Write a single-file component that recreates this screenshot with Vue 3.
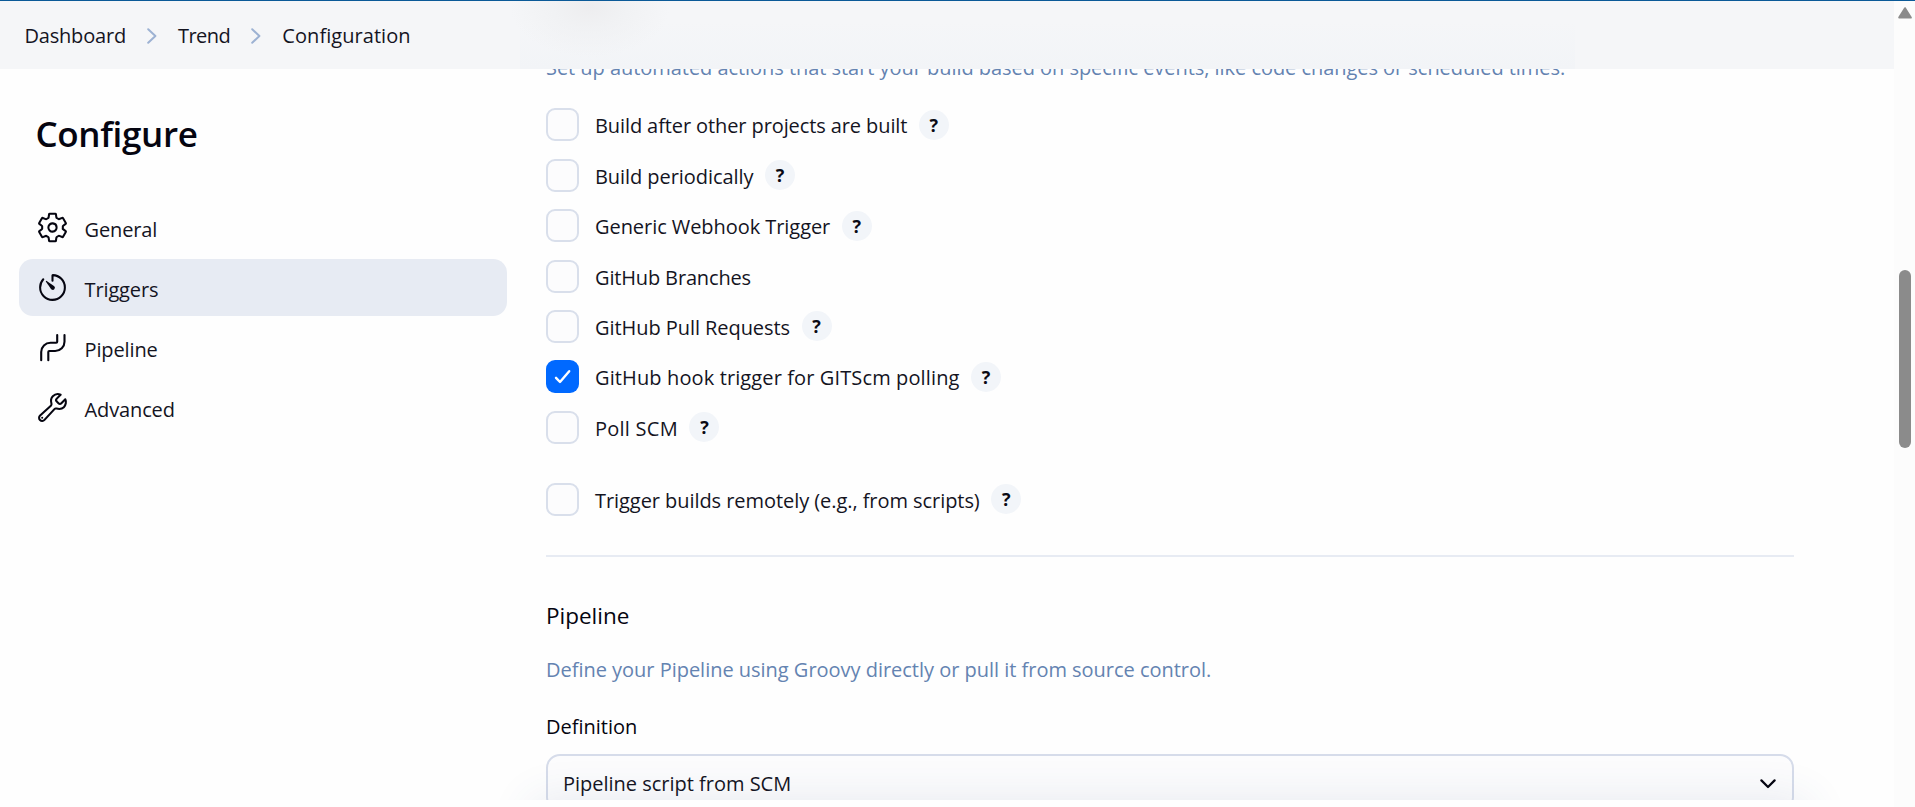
<script setup>
const crumbs = [
  { text: 'Dashboard', cls: 'crumb-dashboard' },
  { text: 'Trend', cls: 'crumb-trend' },
  { text: 'Configuration', cls: 'crumb-configuration' },
]

const sections = [
  { text: 'General', icon: 'gear' },
  { text: 'Triggers', icon: 'timer', active: true },
  { text: 'Pipeline', icon: 'pipeline' },
  { text: 'Advanced', icon: 'wrench' },
]

const triggers = [
  { text: 'Build after other projects are built', help: true, cls: 't-after' },
  { text: 'Build periodically', help: true, cls: 't-periodic' },
  { text: 'Generic Webhook Trigger', help: true, cls: 't-webhook' },
  { text: 'GitHub Branches', cls: 't-branches' },
  { text: 'GitHub Pull Requests', help: true, cls: 't-pulls' },
  { text: 'GitHub hook trigger for GITScm polling', help: true, checked: true, cls: 't-hook' },
  { text: 'Poll SCM', help: true, cls: 't-poll' },
  { text: 'Trigger builds remotely (e.g., from scripts)', help: true, cls: 't-remote' },
]
</script>

<template>
  <div class="window">
    <div class="page">
      <header class="breadcrumbs">
        <template v-for="(crumb, i) in crumbs" :key="crumb.text">
          <svg v-if="i" class="chevron" viewBox="0 0 10 16">
            <path d="M1.2 1.2 8.4 8 1.2 14.8" />
          </svg>
          <a :class="crumb.cls">{{ crumb.text }}</a>
        </template>
      </header>

      <div class="body">
        <aside class="sidebar">
          <h1>Configure</h1>
          <nav>
            <a v-for="item in sections" :key="item.text" class="task" :class="{ active: item.active }">
              <svg v-if="item.icon === 'gear'" class="icon" viewBox="0 0 512 512">
                <path d="M262.29 192.31a64 64 0 1057.4 57.4 64.13 64.13 0 00-57.4-57.4zM416.39 256a154.34 154.34 0 01-1.53 20.79l45.21 35.46a10.81 10.81 0 012.45 13.75l-42.77 74a10.81 10.81 0 01-13.14 4.59l-44.9-18.08a16.11 16.11 0 00-15.17 1.75A164.48 164.48 0 01325 400.8a15.94 15.94 0 00-8.82 12.14l-6.73 47.89a11.08 11.08 0 01-10.68 9.17h-85.54a11.11 11.11 0 01-10.69-8.87l-6.72-47.82a16.07 16.07 0 00-9-12.22 155.3 155.3 0 01-21.46-12.57 16 16 0 00-15.11-1.71l-44.89 18.07a10.81 10.81 0 01-13.14-4.58l-42.77-74a10.8 10.8 0 012.45-13.75l38.21-30a16.05 16.05 0 006-14.08c-.36-4.17-.58-8.33-.58-12.5s.21-8.27.58-12.35a16 16 0 00-6.07-13.94l-38.19-30A10.81 10.81 0 0149.48 186l42.77-74a10.81 10.81 0 0113.14-4.59l44.9 18.08a16.11 16.11 0 0015.17-1.75A164.48 164.48 0 01187 111.2a15.94 15.94 0 008.82-12.14l6.73-47.89A11.08 11.08 0 01213.23 42h85.54a11.11 11.11 0 0110.69 8.87l6.72 47.82a16.07 16.07 0 009 12.22 155.3 155.3 0 0121.46 12.57 16 16 0 0015.11 1.71l44.89-18.07a10.81 10.81 0 0113.14 4.58l42.77 74a10.8 10.8 0 01-2.45 13.75l-38.21 30a16.05 16.05 0 00-6.05 14.08c.33 4.14.55 8.3.55 12.47z" />
              </svg>
              <svg v-else-if="item.icon === 'timer'" class="icon" viewBox="0 0 512 512">
                <path d="M112.91 128A191.85 191.85 0 0064 254c-1.18 106.35 85.65 193.8 192 194 106.2.2 192-85.83 192-192 0-104.54-83.55-189.61-187.5-192a4.36 4.36 0 00-4.5 4.37V152" />
                <path class="solid" d="M233.38 278.63l-79-113a8.13 8.13 0 0111.32-11.32l113 79a32.5 32.5 0 01-37.25 53.26 33.21 33.21 0 01-8.07-7.94z" />
              </svg>
              <svg v-else-if="item.icon === 'pipeline'" class="icon thin" viewBox="0 0 33 33">
                <path d="M5.2 29.3V21a9.3 9.3 0 0 1 9.3-9.3h5.7a1 1 0 0 0 1-1V4" />
                <path d="M12.3 29.3V21a1 1 0 0 1 1-1h5.9a9.3 9.3 0 0 0 9.3-9.3V4" />
              </svg>
              <svg v-else class="icon" viewBox="0 0 512 512">
                <path d="M393.87 190a32.1 32.1 0 01-45.25 0l-26.57-26.57a32.09 32.09 0 010-45.26L382.19 58a1 1 0 00-.3-1.64c-38.82-16.64-89.15-8.16-121.11 23.57-30.58 30.35-32.32 76-21.12 115.84a31.93 31.93 0 01-9.06 32.08L64 380a48.17 48.17 0 1068 68l153.86-167a31.93 31.93 0 0131.6-9.13c39.54 10.59 84.54 8.6 114.72-21.19 32.49-32 39.5-88.56 23.75-120.93a1 1 0 00-1.6-.26z" />
                <circle class="solid" cx="96" cy="416" r="16" />
              </svg>
              <span>{{ item.text }}</span>
            </a>
          </nav>
        </aside>

        <main class="content">
          <p class="description intro">Set up automated actions that start your build based on specific events, like code changes or scheduled times.</p>

          <div class="triggers">
            <div v-for="item in triggers" :key="item.text" class="trigger" :class="item.cls">
              <span class="checkbox" :class="{ checked: item.checked }">
                <svg v-if="item.checked" viewBox="0 0 33 33"><path d="M10 17.8 14 22 23.2 11.2" /></svg>
              </span>
              <span class="label">{{ item.text }}</span>
              <span v-if="item.help" class="help">?</span>
            </div>
          </div>

          <hr />

          <h2>Pipeline</h2>
          <p class="description define">Define your Pipeline using Groovy directly or pull it from source control.</p>
          <div class="field-label">Definition</div>
          <div class="select">
            <span>Pipeline script from SCM</span>
            <svg viewBox="0 0 16 10"><path d="M1.4 1.4 8 8 14.6 1.4" /></svg>
          </div>
        </main>
        <div class="bottom-shadow"></div>
      </div>
    </div>

    <div class="scrollbar">
      <svg viewBox="0 0 14 12"><path d="M7 1.2 12.8 10.6H1.2Z" /></svg>
      <div class="thumb"></div>
    </div>
  </div>
</template>

<style>
body {
  margin: 0;
  background: #fff;
  overflow: hidden;
}
</style>

<style scoped>
.window {
  box-sizing: border-box;
  display: flex;
  width: 1915px;
  height: 807px;
  border-top: 1px solid #0b5a98;
  background: #fefefe;
  color: #14141f;
  font-family: "Open Sans", "Noto Sans", sans-serif;
  font-size: 20px;
  line-height: 30px;
}

.page {
  width: 1894px;
  display: flex;
  flex-direction: column;
}

.breadcrumbs {
  box-sizing: border-box;
  flex: none;
  display: flex;
  align-items: center;
  height: 68px;
  padding: 2px 0 0 24.5px;
  background:
    radial-gradient(ellipse 80px 50px at 590px 6px, #ededef 0%, rgba(238, 239, 241, 0.6) 45%, rgba(245, 246, 248, 0) 100%),
    linear-gradient(to bottom, rgba(242, 244, 247, 0) 20px, #f2f4f7 68px) 520px 0 / 1055px 68px no-repeat,
    #f5f6f8;
}

.crumb-dashboard {
  letter-spacing: -0.2px;
}

.crumb-trend {
  letter-spacing: -0.5px;
}

.crumb-configuration {
  letter-spacing: 0.05px;
}

.chevron {
  width: 10px;
  height: 16px;
  margin: 0 21px 0 21px;
  fill: none;
  stroke: #9db2d3;
  stroke-width: 2;
  stroke-linecap: round;
  stroke-linejoin: round;
}

.body {
  position: relative;
  display: flex;
  height: 731px;
  overflow: hidden;
}

.sidebar {
  flex: none;
  width: 488px;
  padding: 41px 0 0 19px;
}

h1 {
  margin: 0 0 41px 16.5px;
  color: #050510;
  font-size: 35px;
  font-weight: 600;
  letter-spacing: -0.35px;
  line-height: 48px;
}

nav {
  display: flex;
  flex-direction: column;
  gap: 3px;
}

.task {
  display: flex;
  align-items: center;
  height: 57px;
  padding-left: 17px;
  border-radius: 14px;
}

.task.active {
  background: #e7ebf3;
}

.task span {
  margin-left: 15.5px;
  padding-top: 4px;
  letter-spacing: -0.12px;
}

.icon {
  width: 33px;
  height: 33px;
  fill: none;
  stroke: #050510;
  stroke-width: 32;
  stroke-linecap: round;
  stroke-linejoin: round;
}

.icon.thin {
  stroke-width: 2.1;
}

.icon .solid {
  fill: #050510;
  stroke: none;
}

.content {
  width: 1248px;
  margin-left: 39px;
}

.description {
  margin: 0;
  color: #6483b1;
  white-space: nowrap;
}

.intro {
  margin-top: -16px;
  letter-spacing: -0.045px;
}

.triggers {
  margin-top: 25px;
}

.trigger {
  display: flex;
  align-items: flex-start;
  height: 33px;
  margin-bottom: 18px;
}

.trigger.t-periodic,
.trigger.t-branches,
.trigger.t-pulls {
  margin-bottom: 17px;
}

.trigger.t-poll {
  margin-bottom: 39px;
}

.trigger.t-remote {
  margin-bottom: 0;
}

.checkbox {
  box-sizing: border-box;
  width: 33px;
  height: 33px;
  border: 2px solid #d9dfeb;
  border-radius: 9px;
  background: #fcfcfd;
}

.checkbox.checked {
  border: 0;
  background: #0069ff;
}

.checkbox svg {
  display: block;
  fill: none;
  stroke: #fff;
  stroke-width: 2.4;
  stroke-linecap: round;
  stroke-linejoin: round;
}

.label {
  margin-left: 16px;
  padding-top: 1px;
  line-height: 33px;
  letter-spacing: -0.06px;
}

.help {
  width: 30px;
  height: 30px;
  margin: 1px 0 0 11.5px;
  border-radius: 50%;
  background: #f2f5f9;
  color: #0a0a14;
  font-size: 18px;
  font-weight: 700;
  line-height: 30px;
  text-align: center;
}

.t-after .help,
.t-webhook .help,
.t-hook .help {
  margin-top: 2px;
}

.t-after .label {
  letter-spacing: -0.1px;
}

.t-branches .label {
  letter-spacing: -0.15px;
}

.t-hook .label {
  letter-spacing: 0.12px;
}

.t-poll .label {
  letter-spacing: 0.25px;
}

hr {
  height: 2px;
  margin: 39px 0 43px;
  border: 0;
  background: #e7ebf3;
}

h2 {
  margin: 0;
  color: #050510;
  font-size: 22.5px;
  font-weight: 400;
  line-height: 32px;
}

.define {
  margin-top: 23px;
  letter-spacing: -0.02px;
}

.field-label {
  margin-top: 27px;
  color: #050510;
  letter-spacing: 0;
}

.select {
  box-sizing: border-box;
  display: flex;
  align-items: center;
  justify-content: space-between;
  height: 57px;
  margin-top: 12px;
  padding: 2px 16.5px 0 15px;
  border: 2px solid #d6dcea;
  border-radius: 14px;
  background: #fcfcfd;
}

.select span {
  letter-spacing: -0.01px;
}

.select svg {
  width: 16px;
  height: 10px;
  fill: none;
  stroke: #050510;
  stroke-width: 2.2;
  stroke-linecap: round;
  stroke-linejoin: round;
}

.bottom-shadow {
  position: absolute;
  left: 532px;
  top: 731px;
  width: 1276px;
  height: 60px;
  box-shadow: 0 0 45px rgba(55, 85, 125, 0.11);
}

.scrollbar {
  display: flex;
  flex-direction: column;
  align-items: center;
  width: 21px;
  background: #fcfcfc;
}

.scrollbar svg {
  width: 14px;
  height: 12px;
  margin: 6px 0 0 1px;
  fill: #8b8b8b;
  stroke: #8b8b8b;
  stroke-width: 2;
  stroke-linejoin: round;
}

.thumb {
  width: 12px;
  height: 178px;
  margin: 251px 0 0 1px;
  border-radius: 6px;
  background: #8b8b8b;
}
</style>
